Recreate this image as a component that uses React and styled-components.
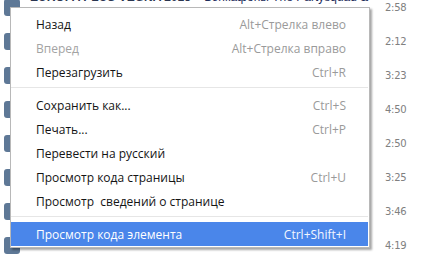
import React from 'react';
import styled, { createGlobalStyle } from 'styled-components';

const GlobalStyle = createGlobalStyle`
  html, body {
    margin: 0;
    padding: 0;
    background: #fff;
    overflow: hidden;
  }
`;

const Page = styled.div`
  position: relative;
  width: 423px;
  height: 261px;
  overflow: hidden;
  font-family: "Segoe UI", "Open Sans", "Noto Sans", sans-serif;
`;

const TrackList = styled.div`
  margin-top: -10px;
`;

const Track = styled.div`
  height: 34px;
  display: flex;
  align-items: center;
  padding: 0 18px 0 4px;
`;

const Cover = styled.div`
  width: 16px;
  height: 17px;
  border-radius: 3px;
  background: #5e7896;
  flex: none;
`;

const Info = styled.div`
  flex: 1;
  align-self: flex-start;
  padding: 0 0 0 10px;
  font-family: "Liberation Sans", Arial, sans-serif;
  font-size: 12px;
  line-height: 14px;
  font-weight: bold;
  color: #2a3550;
  white-space: nowrap;
  overflow: hidden;
`;

const Artist = styled.span`
  font-weight: normal;
  color: #1e2d5c;
`;

const Duration = styled.div`
  width: 20px;
  font-family: "DejaVu Sans", Tahoma, sans-serif;
  font-size: 10px;
  color: #808080;
  letter-spacing: -0.3px;
`;

const Menu = styled.div`
  position: absolute;
  left: 10px;
  top: 7px;
  width: 360px;
  box-sizing: border-box;
  background: #fff;
  border: 1px solid #b8b8b8;
  box-shadow: 2px 2px 2px rgba(0, 0, 0, 0.35);
  padding: 4px 1px 1px 0;
`;

const Item = styled.div`
  height: 24px;
  display: flex;
  align-items: center;
  justify-content: space-between;
  padding: 0 22px 0 25px;
  font-size: 12px;
  color: ${p => (p.$active ? '#fff' : p.$disabled ? '#a3a3a3' : '#141414')};
  background: ${p => (p.$active ? '#4a86ea' : 'transparent')};
  white-space: pre;
`;

const Shortcut = styled.span`
  color: ${p => (p.$active ? '#f2f6ff' : '#9a9a9a')};
`;

const Separator = styled.div`
  height: 1px;
  background: #e6e6e6;
  margin: 3px 0 5px;
`;

const tracks = [
  { title: 'EUROPA PLUS VEGNA 2015', artist: 'Бэнкафоны The Partysquad &', time: '2:58' },
  { title: '', artist: '', time: '2:12' },
  { title: '', artist: '', time: '3:23' },
  { title: '', artist: '', time: '4:50' },
  { title: '', artist: '', time: '2:50' },
  { title: '', artist: '', time: '3:25' },
  { title: '', artist: '', time: '3:46' },
  { title: '', artist: '', time: '4:19' },
];

const menu = [
  { label: 'Назад', key: 'Alt+Стрелка влево' },
  { label: 'Вперед', key: 'Alt+Стрелка вправо', disabled: true },
  { label: 'Перезагрузить', key: 'Ctrl+R' },
  'sep',
  { label: 'Сохранить как...', key: 'Ctrl+S' },
  { label: 'Печать...', key: 'Ctrl+P' },
  { label: 'Перевести на русский' },
  { label: 'Просмотр кода страницы', key: 'Ctrl+U' },
  { label: 'Просмотр  сведений о странице' },
  'sep',
  { label: 'Просмотр кода элемента', key: 'Ctrl+Shift+I', active: true },
];

export default function App() {
  return (
    <Page>
      <GlobalStyle />
      <TrackList>
        {tracks.map((t, i) => (
          <Track key={i}>
            <Cover />
            <Info>
              {t.title} {t.artist && <>– <Artist>{t.artist}</Artist></>}
            </Info>
            <Duration>{t.time}</Duration>
          </Track>
        ))}
      </TrackList>
      <Menu>
        {menu.map((m, i) =>
          m === 'sep' ? (
            <Separator key={i} />
          ) : (
            <Item key={i} $disabled={m.disabled} $active={m.active}>
              <span>{m.label}</span>
              {m.key && <Shortcut $active={m.active}>{m.key}</Shortcut>}
            </Item>
          )
        )}
      </Menu>
    </Page>
  );
}
